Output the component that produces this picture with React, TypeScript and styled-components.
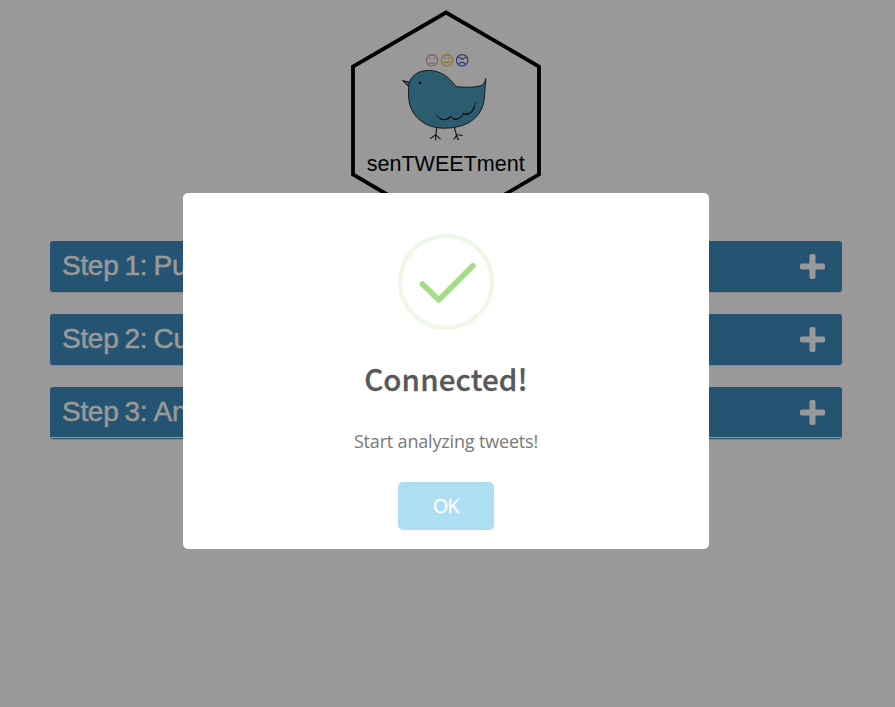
import React from "react";
import styled, { createGlobalStyle } from "styled-components";

const GlobalStyle = createGlobalStyle`
  * { box-sizing: border-box; }
  html, body { margin: 0; background: #fff; overflow: hidden; }
`;

const Page = styled.main`
  height: 707px;
  padding: 10px 53px 0 50px;
  font-family: "Liberation Sans", Arial, sans-serif;
`;

const LogoArea = styled.header`
  display: flex;
  justify-content: center;
  height: 231px;
`;

const Logo = styled.svg`
  display: block;
  width: 192px;
  height: 222px;
`;

const Steps = styled.section`
  display: flex;
  flex-direction: column;
  gap: 22px;
`;

const StepBox = styled.article`
  border-radius: 3px;
  background: #3c8dbc;
  box-shadow: 0 1px 1px rgba(0, 0, 0, 0.1);
  overflow: hidden;
`;

const StepHeader = styled.div`
  display: flex;
  align-items: center;
  justify-content: space-between;
  height: 51px;
  padding: 0 16px 0 12px;
  color: #fff;
`;

const StepTitle = styled.h3`
  margin: 0 0 2px;
  font-size: 28px;
  line-height: 48px;
  font-weight: 400;
  font-kerning: none;
  letter-spacing: -0.3px;
  word-spacing: -1.3px;
  -webkit-text-stroke: 0.45px currentColor;
  white-space: nowrap;
`;

const StepBody = styled.div`
  height: 2px;
  margin-top: -1px;
  border-top: 1px solid #fff;
`;

const PlusIcon = styled.svg`
  display: block;
  width: 27px;
  height: 27px;
`;

const Overlay = styled.div`
  position: fixed;
  inset: 0;
  display: flex;
  align-items: flex-start;
  justify-content: center;
  padding: 193px 3px 0 0;
  background: rgba(0, 0, 0, 0.4);
`;

const Dialog = styled.div`
  display: flex;
  flex-direction: column;
  align-items: center;
  width: 526px;
  height: 356px;
  padding-top: 41px;
  border-radius: 5px;
  background: #fff;
  font-family: "Open Sans", sans-serif;
`;

const SuccessIcon = styled.svg`
  display: block;
  width: 96px;
  height: 96px;
`;

const DialogTitle = styled.h2`
  margin: 28px 0 0;
  color: #595959;
  font: 500 29.5px/40px "Noto Sans CJK SC", "Noto Sans CJK JP", sans-serif;
  letter-spacing: 0.15px;
  -webkit-text-stroke: 0.3px currentColor;
  white-space: nowrap;
`;

const Message = styled.p`
  margin: 31px 0 0;
  color: #797979;
  font-size: 18px;
  line-height: 24px;
  letter-spacing: -0.17px;
  white-space: nowrap;
`;

const ConfirmButton = styled.button`
  width: 96px;
  height: 48px;
  margin-top: 29px;
  padding: 0;
  border: 0;
  border-radius: 5px;
  background: #aedef4;
  color: #fff;
  font: 400 19.5px/46px "Open Sans", sans-serif;
  letter-spacing: -0.5px;
  -webkit-text-stroke: 0.3px currentColor;
`;

const steps = ["Step 1: Pull Tweets", "Step 2: Customize", "Step 3: Analyze"];

const SenTweetmentLogo = () => (
  <Logo viewBox="350 10 192 222">
    <path d="M446 12.5 539 66.5V174.5L446 229 353 174.5V66.5Z" fill="none" stroke="#000" strokeWidth="3.8" />
    <g fill="none" stroke="#e98ba4" strokeWidth="1.1">
      <circle cx="432" cy="60.3" r="5.7" />
      <path d="M430 57v2.4M434 57v2.4M428.6 62c1.5 2.4 5.3 2.4 6.8 0" />
    </g>
    <g fill="none" stroke="#f1b33b" strokeWidth="1.1">
      <circle cx="447" cy="60.3" r="5.7" />
      <path d="M445 57v2.4M449 57v2.4M443.7 62.4h6.6" />
    </g>
    <g fill="none" stroke="#4d56cf" strokeWidth="1.2">
      <circle cx="462.2" cy="60.3" r="5.7" />
      <path d="M458.5 57l3 1.5v1.2M466 57l-3 1.5v1.2M459 64c1.4-2.3 5-2.3 6.4 0" />
    </g>
    <g stroke="#1b1b1b" strokeLinecap="round" strokeLinejoin="round">
      <path d="M410 82.2 402.5 80.6 405.2 83.3 409 86.7Z" fill="#4a9aba" strokeWidth="1" />
      <path d="M408.6 86C410 75 419 70.4 428.4 70.4C440 70.4 449 76.5 456 86.7C465 87.3 474 87.8 480.5 85.8C484 84.8 485.2 81.6 485.7 78.5C486 83.5 484.9 87 484.7 94C484.3 115 470 128.2 444 128.2C422 128 408.7 113.5 408.6 96Z" fill="#4a9aba" strokeWidth="0.9" />
      <path d="M436.7 115.5C440.2 120.8 448.2 120.9 450.7 116.5C454.7 121 461.5 119.3 463.5 113.3C469.5 115.8 474 111 475.3 103" fill="none" strokeWidth="0.8" />
      <path d="M440 118.6C443 120.3 447.8 120 450.7 116.5M453 118.6C456.8 120.4 461 118.5 463.5 113.3M465 114.5C469.6 114.9 472.6 111.6 474.5 107" fill="none" strokeWidth="1.2" />
      <path d="M436.6 128.3 435.8 135.7M436 134.6 430.8 138.3M435.8 135 435.7 140M436 134.8 440.2 138.8M454.5 127.6 456.5 135.4M456.5 135.2 454 139.2M456.5 135 457.7 139.2 458.7 139.4M456.5 135.2C458 134.5 460 134.6 462.2 135.6" fill="none" strokeWidth="1.1" />
    </g>
    <circle cx="420" cy="83" r="1.3" fill="#111" />
    <text x="366.7" y="171.3" textLength="158" lengthAdjust="spacingAndGlyphs" fontFamily="Liberation Sans, Arial, sans-serif" fontSize="22" fill="#000">senTWEETment</text>
  </Logo>
);

export default function App() {
  return (
    <>
      <GlobalStyle />
      <Page>
        <LogoArea><SenTweetmentLogo /></LogoArea>
        <Steps>
          {steps.map((title, index) => (
            <StepBox key={title}>
              <StepHeader>
                <StepTitle>{title}</StepTitle>
                <PlusIcon viewBox="0 0 27 27" fill="#fff">
                  <rect x="10.5" y="1" width="6" height="25" rx="1.7" />
                  <rect x="1" y="10.5" width="25" height="6" rx="1.7" />
                </PlusIcon>
              </StepHeader>
              {index === steps.length - 1 && <StepBody />}
            </StepBox>
          ))}
        </Steps>
      </Page>
      <Overlay>
        <Dialog role="dialog" aria-modal="true">
          <SuccessIcon viewBox="0 0 96 96" fill="none">
            <circle cx="48" cy="48" r="46" stroke="#edf8e7" strokeWidth="4" />
            <path d="M24.4 50 40.8 66 75 31.8" stroke="#a5dc86" strokeWidth="5.6" strokeLinecap="round" strokeLinejoin="round" />
          </SuccessIcon>
          <DialogTitle>Connected!</DialogTitle>
          <Message>Start analyzing tweets!</Message>
          <ConfirmButton>OK</ConfirmButton>
        </Dialog>
      </Overlay>
    </>
  );
}
